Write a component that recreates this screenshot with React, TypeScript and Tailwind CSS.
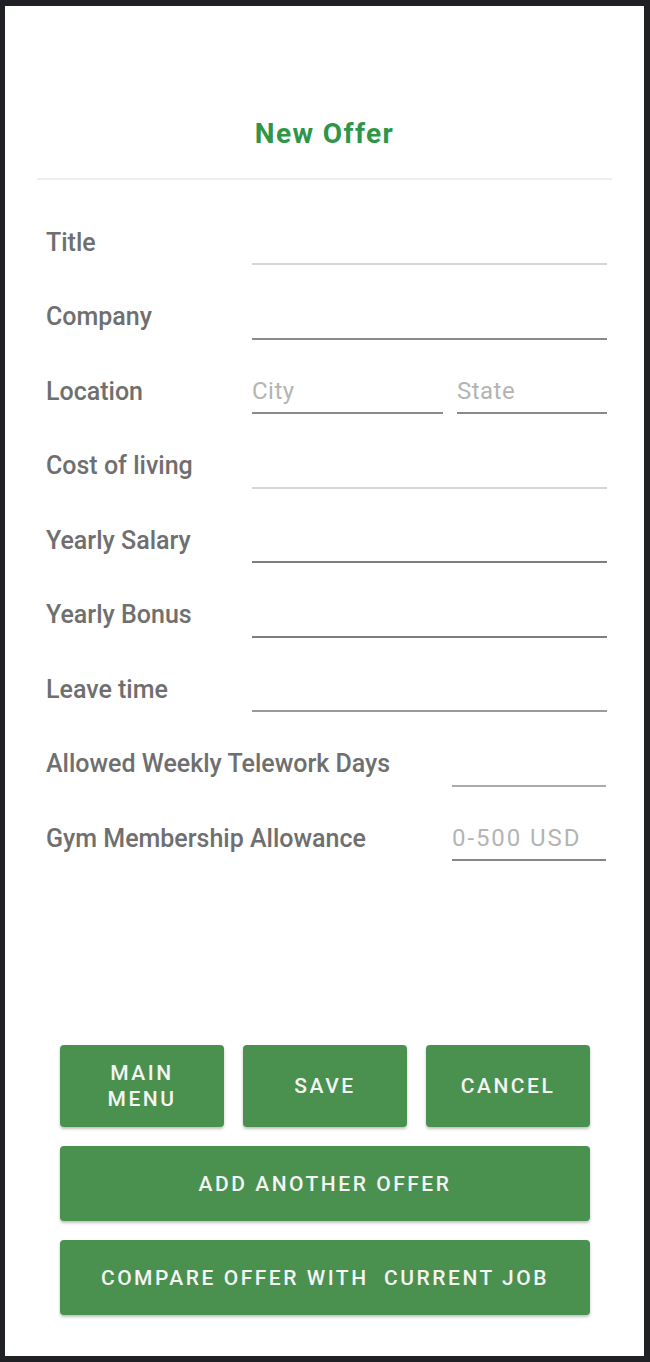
const font = { fontFamily: 'Roboto, "Liberation Sans", sans-serif' };

type Row = { label: string; line: string; kind?: 'location' | 'short'; placeholder?: string };

const rows: Row[] = [
  { label: 'Title', line: 'border-[#d6d6d6]' },
  { label: 'Company', line: 'border-[#8a8a8a]' },
  { label: 'Location', line: 'border-[#8a8a8a]', kind: 'location' },
  { label: 'Cost of living', line: 'border-[#d6d6d6]' },
  { label: 'Yearly Salary', line: 'border-[#7e7e7e]' },
  { label: 'Yearly Bonus', line: 'border-[#7e7e7e]' },
  { label: 'Leave time', line: 'border-[#9a9a9a]' },
  { label: 'Allowed Weekly Telework Days', line: 'border-[#ababab]', kind: 'short' },
  { label: 'Gym Membership Allowance', line: 'border-[#868686]', kind: 'short', placeholder: '0-500 USD' },
];

const Field = ({
  line,
  placeholder,
  className,
  wide = false,
}: {
  line: string;
  placeholder?: string;
  className: string;
  wide?: boolean;
}) => (
  <div className={`h-[44px] border-b-2 ${line} flex items-center ${className}`}>
    {placeholder && (
      <span
        className={`text-[24px] text-[#b4b4b4] leading-none ${wide ? 'tracking-[0.08em]' : 'tracking-[0.02em]'}`}
      >
        {placeholder}
      </span>
    )}
  </div>
);

const GreenButton = ({ children, className = '' }: { children: React.ReactNode; className?: string }) => (
  <button
    className={`bg-[#4a914f] text-[#f4f4f4] rounded-[4px] shadow-[0_2px_3px_rgba(0,0,0,0.25)] font-medium text-[21px] tracking-[0.12em] uppercase leading-[26px] flex items-center justify-center text-center ${className}`}
  >
    {children}
  </button>
);

const App = () => {
  return (
    <div className="bg-[#202124] pt-[6px] pl-[5px] pr-[6px] pb-[6px] h-[1362px]" style={font}>
      <div className="bg-white h-full flex flex-col">
        <h1 className="mt-[112px] text-center text-[28px] leading-[32px] font-bold tracking-[0.05em] text-[#2e9648]">
          New Offer
        </h1>
        <div className="mt-[28px] mx-[32px] h-[2px] bg-[#eeeeee]" />

        <div className="mt-[41px] pl-[41px] pr-[37px] flex flex-col gap-[30.5px]">
          {rows.map((r) => (
            <div key={r.label} className="flex items-center">
              <div className="text-[25px] font-medium text-[#6f6f6f] leading-none pb-[2px] flex-1 whitespace-nowrap">
                {r.label}
              </div>
              {r.kind === 'location' ? (
                <div className="flex gap-[14px] w-[355px]">
                  <Field line={r.line} placeholder="City" className="w-[191px]" />
                  <Field line={r.line} placeholder="State" className="flex-1" />
                </div>
              ) : r.kind === 'short' ? (
                <Field line={r.line} placeholder={r.placeholder} className="w-[154px] mr-[1px]" wide />
              ) : (
                <Field line={r.line} className="w-[355px]" />
              )}
            </div>
          ))}
        </div>

        <div className="mt-[184px] ml-[55px] mr-[54px] flex flex-col gap-[19px]">
          <div className="grid grid-cols-3 gap-[19px] h-[82px]">
            <GreenButton>
              Main
              <br />
              Menu
            </GreenButton>
            <GreenButton>Save</GreenButton>
            <GreenButton>Cancel</GreenButton>
          </div>
          <GreenButton className="h-[75px]">Add another offer</GreenButton>
          <GreenButton className="h-[75px] whitespace-pre">Compare offer with  current job</GreenButton>
        </div>
      </div>
    </div>
  );
};

export default App;
